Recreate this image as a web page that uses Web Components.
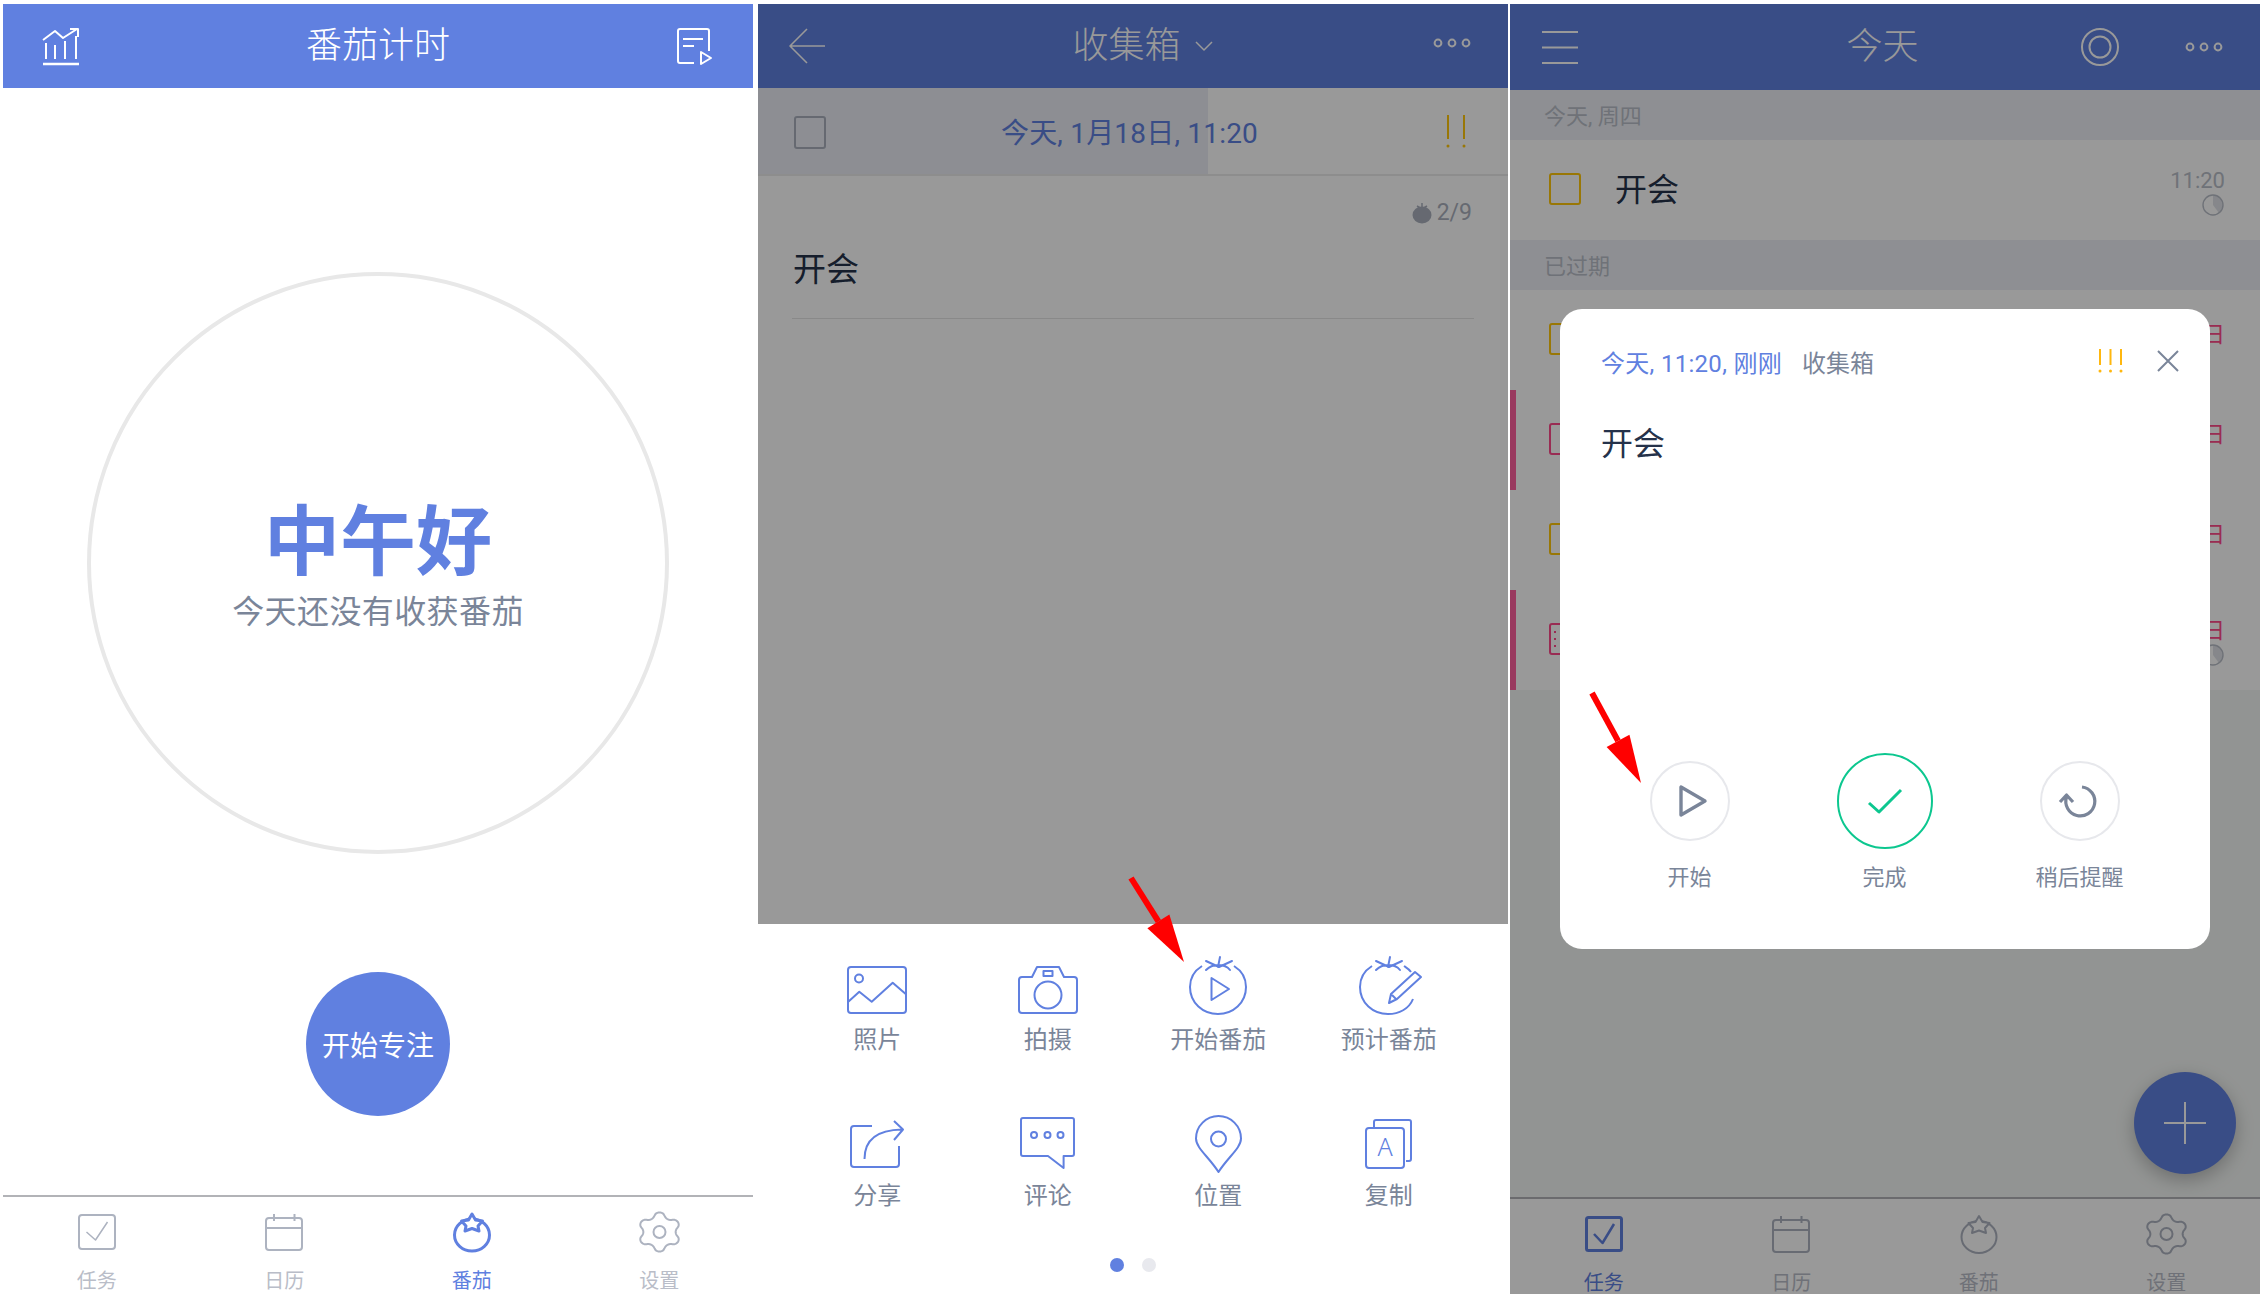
<!DOCTYPE html>
<html lang="zh">
<head>
<meta charset="utf-8">
<title>番茄计时</title>
<style>
  html, body { margin: 0; background: #fff; }
  body {
    font-family: Roboto, "Noto Sans CJK SC", "Noto Sans", sans-serif;
    width: 2265px;
    height: 1300px;
    overflow: hidden;
  }
  .screens { display: flex; padding: 4px 0 0 3px; }
  detail-screen { margin-left: 5px; }
  today-screen { margin-left: 2px; }
</style>
</head>
<body>
<div class="screens">
  <focus-screen></focus-screen>
  <detail-screen></detail-screen>
  <today-screen></today-screen>
</div>

<script>
function gearPath() {
  let d = '';
  for (let i = 0; i <= 120; i++) {
    const t = i / 120 * Math.PI * 2;
    const c = Math.cos(6 * t);
    const r = 17.2 + 2.4 * Math.sign(c) * Math.pow(Math.abs(c), 0.7);
    const x = 19.5 + r * Math.sin(t) * 1.09;
    const y = 20 - r * Math.cos(t);
    d += (i ? 'L' : 'M') + x.toFixed(2) + ' ' + y.toFixed(2);
  }
  return d + 'Z';
}

const leaves = '<path d="M17 4 30 10 43 4M31 0 29 10M17 13C21 9 25 8 29 8C33 8 38 9 41 13" stroke-linecap="round"/>';
const tomatoBody = '<ellipse cx="19" cy="22" rx="17.5" ry="16"/><path fill="var(--tab-bg,#fff)" d="M19 1 22.5 7 29.5 8 25 13 26 18 19 15.5 12 18 13 13 8.5 8 15.5 7Z"/>';

const ICONS = {
  chart: [37, 37, '<path d="M0 12 12 3 20 10 34 1M27 1H35V9M3 15V31M12 17V31M22 13V31M33 8V31"/><path d="M0 36H36" stroke-width="2.5"/>'],
  doc: [36, 37, '<path d="M17 35H3a2 2 0 0 1-2-2V3a2 2 0 0 1 2-2H30a2 2 0 0 1 2 2V23M6 11H26M6 18H17M24 24V36L34 30Z"/>'],
  back: [38, 36, '<path d="M37 18H2M19 1 2 18 19 35" stroke-width="1.6"/>'],
  chevron: [18, 10, '<path d="M1 1 9 9 17 1" stroke-width="1.5"/>'],
  more: [38, 10, '<circle cx="5" cy="5" r="3.4"/><circle cx="19" cy="5" r="3.4"/><circle cx="33" cy="5" r="3.4"/>'],
  menu: [36, 33, '<path d="M0 1H36M0 16.5H36M0 32H36"/>'],
  target: [38, 38, '<circle cx="19" cy="19" r="18"/><circle cx="19" cy="19" r="10.5"/>'],
  task: [38, 36, '<rect x="1" y="1" width="36" height="34" rx="3"/><path d="M8.5 18 17.5 26 29.5 8" stroke-width="1.5"/>'],
  taskOn: [38, 36, '<rect x="1.5" y="1.5" width="35" height="33" rx="2" stroke-width="3"/><path d="M9 18 17.5 27 29 8" stroke-width="2.5"/>'],
  calendar: [38, 37, '<rect x="1" y="4" width="36" height="32" rx="3"/><path d="M1 14H37M9 0V7M29.5 0V7"/>'],
  tomato: [38, 39, tomatoBody],
  tomatoOn: [38, 39, `<g stroke-width="3">${tomatoBody}</g>`],
  gear: [39, 40, `<path d="${gearPath()}"/><circle cx="19.5" cy="20" r="6"/>`],
  photo: [60, 48, '<rect x="1" y="1" width="58" height="46" rx="3"/><circle cx="12" cy="12.5" r="4"/><path d="M1 36 12.3 25.7 24.7 35.7 45.7 16.7 59 28.3"/>'],
  camera: [60, 48, '<path d="M4 11H14L19 1H41L46 11H56a3 3 0 0 1 3 3V44a3 3 0 0 1-3 3H4a3 3 0 0 1-3-3V14a3 3 0 0 1 3-3Z"/><circle cx="30" cy="29" r="13.5"/><rect x="25.5" y="5" width="9" height="5"/>'],
  startTomato: [58, 58, `<path d="M13 9C5 14 1 22 1 30C1 46 14 57 29 57C44 57 57 46 57 30C57 22 53 14 45 9"/>${leaves}<path d="M22.5 21V43L40 32Z"/>`],
  planTomato: [63, 58, `<path d="M13 9C5 14 1 22 1 30C1 46 14 57 29 57C40 57 50 52 54 42M45 9C48 11 50 12 52 15"/>${leaves}<path d="M30 46 32 37 56 15 62 20 38 42ZM33 38 37 42"/>`],
  share: [54, 48, '<path d="M22 6H4a3 3 0 0 0-3 3V44a3 3 0 0 0 3 3H46a3 3 0 0 0 3-3V26M14.5 39C14.5 22 24 10 52 9.5M44 1 53 9.5 44 20"/>'],
  comment: [55, 53, '<path d="M3 1H52a2 2 0 0 1 2 2V37a2 2 0 0 1-2 2H43.6V51L28 39H3a2 2 0 0 1-2-2V3a2 2 0 0 1 2-2Z"/><circle cx="14" cy="18" r="3"/><circle cx="27.5" cy="18" r="3"/><circle cx="40.5" cy="18" r="3"/>'],
  pin: [47, 58, '<path d="M23.5 57C14 42 1 33 1 23.5A22.5 22.5 0 0 1 46 23.5C46 33 33 42 23.5 57Z"/><circle cx="23.5" cy="24" r="7.5"/>'],
  copy: [47, 50, '<rect x="1" y="9" width="38" height="40" rx="3"/><path d="M9 8V3a2 2 0 0 1 2-2H44a2 2 0 0 1 2 2V40a2 2 0 0 1-2 2H41"/><text x="20" y="37" font-size="25" font-weight="300" text-anchor="middle" fill="currentColor" stroke="none" font-family="Noto Sans, sans-serif">A</text>'],
  close: [22, 22, '<path d="M1 1 21 21M21 1 1 21"/>'],
  play: [30, 32, '<path d="M3 2V30L27 16Z" stroke-width="3.4" stroke-linejoin="round"/>'],
  check: [34, 24, '<path d="M1 14 11 23 33 1" stroke-width="3"/>'],
  redo: [40, 40, '<path d="M22 6A14.5 14.5 0 1 1 6.5 16M0 21 6.5 14 13 21" stroke-width="3.2"/>'],
  plus: [42, 42, '<path d="M21 0V42M0 21H42"/>'],
  miniTomato: [20, 20, '<ellipse cx="10" cy="12" rx="9.5" ry="8.5" fill="currentColor" stroke="none"/><path d="M5 3 10 6 15 3M10 0V6" stroke-width="1.5"/>'],
  pie: [22, 22, '<path d="M11 1A10 10 0 0 1 17 19L11 11Z" fill="#dfe2e8" stroke="none"/><circle cx="11" cy="11" r="10" stroke-width="1.4"/>'],
  bang2: [18, 34, '<path d="M1 0V24M17 0V24"/><circle cx="1" cy="31" r="1.5" fill="currentColor" stroke="none"/><circle cx="17" cy="31" r="1.5" fill="currentColor" stroke="none"/>'],
  bang3: [23, 24, '<path d="M1 0V16M11.5 0V16M22 0V16"/><circle cx="1" cy="22" r="1.5" fill="currentColor" stroke="none"/><circle cx="11.5" cy="22" r="1.5" fill="currentColor" stroke="none"/><circle cx="22" cy="22" r="1.5" fill="currentColor" stroke="none"/>']
};

class AppIcon extends HTMLElement {
  connectedCallback() {
    const [w, h, body] = ICONS[this.getAttribute('name')];
    this.attachShadow({ mode: 'open' }).innerHTML = `
      <style>
        :host { display: inline-flex; flex: none; line-height: 0; }
        svg { display: block; overflow: visible; }
      </style>
      <svg width="${w}" height="${h}" viewBox="0 0 ${w} ${h}" fill="none" stroke="currentColor" stroke-width="2" stroke-linejoin="round">${body}</svg>`;
  }
}

class RedArrow extends HTMLElement {
  connectedCallback() {
    const [x1, y1, x2, y2] = this.getAttribute('points').split(' ').map(Number);
    const len = Math.hypot(x2 - x1, y2 - y1);
    const ux = (x2 - x1) / len, uy = (y2 - y1) / len;
    const bx = x2 - ux * 48, by = y2 - uy * 48;
    const ax = bx - uy * 13, ay = by + ux * 13;
    const cx = bx + uy * 13, cy = by - ux * 13;
    this.attachShadow({ mode: 'open' }).innerHTML = `
      <style>
        :host { position: absolute; left: 0; top: 0; z-index: 5; }
        svg { display: block; overflow: visible; }
      </style>
      <svg width="1" height="1">
        <line x1="${x1}" y1="${y1}" x2="${bx}" y2="${by}" stroke="#f00" stroke-width="6"/>
        <polygon points="${ax},${ay} ${cx},${cy} ${x2},${y2}" fill="#f00"/>
      </svg>`;
  }
}

class AppHeader extends HTMLElement {
  connectedCallback() {
    this.attachShadow({ mode: 'open' }).innerHTML = `
      <style>
        :host {
          display: grid;
          grid-template-columns: 1fr auto 1fr;
          align-items: center;
          flex: none;
          height: var(--head-h, 84px);
          padding: 0 var(--head-pad-r, 40px) 0 var(--head-pad-l, 40px);
          box-sizing: border-box;
          background: #6080e0;
          color: #fff;
          font-size: 36px;
          font-weight: 300;
          line-height: 44px;
        }
        .left { display: flex; justify-content: flex-start; }
        .center { display: flex; align-items: center; }
        .right { display: flex; justify-content: flex-end; align-items: center; }
      </style>
      <div class="left"><slot name="left"></slot></div>
      <div class="center"><slot></slot></div>
      <div class="right"><slot name="right"></slot></div>`;
  }
}

class TabBar extends HTMLElement {
  connectedCallback() {
    const on = this.getAttribute('active');
    const tabs = [['任务', 'task'], ['日历', 'calendar'], ['番茄', 'tomato'], ['设置', 'gear']];
    this.attachShadow({ mode: 'open' }).innerHTML = `
      <style>
        :host {
          display: grid;
          grid-template-columns: repeat(4, 1fr);
          flex: none;
          height: var(--tab-h, 99px);
          box-sizing: border-box;
          border-top: 2px solid #b2b3b7;
          background: #fff;
        }
        .tab { display: flex; flex-direction: column; align-items: center; padding-top: 15px; color: #adb3c0; }
        .tab.on { color: #6080e0; }
        .box { height: 40px; display: flex; align-items: center; justify-content: center; }
        .label { margin-top: 17px; font-size: 20px; line-height: 24px; color: #b9bdc8; }
        .on .label { color: #6080e0; }
      </style>
      ${tabs.map(([label, icon]) => {
        const isOn = label === on;
        const name = isOn ? icon + 'On' : icon;
        return `<div class="tab${isOn ? ' on' : ''}"><div class="box"><app-icon name="${name}"></app-icon></div><div class="label">${label}</div></div>`;
      }).join('')}`;
  }
}

class FocusScreen extends HTMLElement {
  connectedCallback() {
    this.attachShadow({ mode: 'open' }).innerHTML = `
      <style>
        :host {
          display: flex;
          flex-direction: column;
          flex: none;
          width: 750px;
          height: 1290px;
          background: #fff;
        }
        main { flex: 1; display: flex; flex-direction: column; align-items: center; padding-top: 184px; }
        .ring {
          width: 582px;
          height: 582px;
          box-sizing: border-box;
          border: 4px solid #e8e8e8;
          border-radius: 50%;
          padding-top: 9px;
          display: flex;
          flex-direction: column;
          align-items: center;
          justify-content: center;
        }
        h1 { margin: 0 0 9px; font-size: 76px; line-height: 80px; font-weight: 700; color: #6080e0; }
        p { margin: 0; font-size: 32px; line-height: 40px; letter-spacing: .4px; color: #7a8599; }
        .go {
          margin-top: 118px;
          width: 144px;
          height: 144px;
          border-radius: 50%;
          background: #6080e0;
          color: #fff;
          font-size: 28px;
          display: flex;
          align-items: center;
          justify-content: center;
        }
      </style>
      <app-header>
        <app-icon slot="left" name="chart"></app-icon>
        番茄计时
        <app-icon slot="right" name="doc"></app-icon>
      </app-header>
      <main>
        <div class="ring">
          <h1>中午好</h1>
          <p>今天还没有收获番茄</p>
        </div>
        <div class="go">开始专注</div>
      </main>
      <tab-bar active="番茄"></tab-bar>`;
  }
}

class SheetItem extends HTMLElement {
  connectedCallback() {
    this.attachShadow({ mode: 'open' }).innerHTML = `
      <style>
        :host { display: flex; flex-direction: column; align-items: center; }
        .box { height: 59px; display: flex; align-items: center; justify-content: center; color: #6080e0; }
        .label { margin-top: var(--label-gap, 13px); font-size: 24px; line-height: 24px; color: #7a8599; white-space: nowrap; }
      </style>
      <div class="box"><slot></slot></div>
      <div class="label">${this.getAttribute('label')}</div>`;
  }
}

class DetailScreen extends HTMLElement {
  connectedCallback() {
    this.attachShadow({ mode: 'open' }).innerHTML = `
      <style>
        :host {
          display: flex;
          flex-direction: column;
          flex: none;
          width: 750px;
          height: 1290px;
          background: #fff;
          position: relative;
        }
        .top { position: relative; flex: none; height: 920px; display: flex; flex-direction: column; }
        .scrim { position: absolute; inset: 0; background: rgba(0, 0, 0, .4); }
        .title { margin-left: 26px; display: flex; align-items: center; gap: 14px; }
        .date {
          flex: none;
          height: 88px;
          box-sizing: border-box;
          display: grid;
          grid-template-columns: 1fr auto 1fr;
          align-items: center;
          padding: 0 43px 0 36px;
          background: linear-gradient(90deg, #ebedf5 450px, #fff 450px);
          border-bottom: 2px solid #ececec;
          font-size: 28px;
          letter-spacing: .2px;
          color: #6080e0;
        }
        .box { width: 32px; height: 33px; box-sizing: border-box; border: 2.5px solid #aab0bd; border-radius: 3px; margin-top: 2px; }
        .flag { justify-self: end; color: #ffc60a; margin-top: 2px; }
        .note { margin: 0 34px; padding-top: 25px; padding-bottom: 28px; border-bottom: 1px solid #e4e4e4; }
        .count { display: flex; justify-content: flex-end; align-items: center; gap: 5px; font-size: 23px; line-height: 24px; color: #aab0bd; padding-right: 2px; }
        .name { margin-top: 25px; padding-left: 1px; font-size: 33px; line-height: 40px; color: #25324a; }
        .sheet { flex: 1; padding-top: 32px; }
        .grid { display: grid; grid-template-columns: repeat(4, 170.5px); row-gap: 62px; padding-left: 34px; }
        .row2 { --label-gap: 11px; }
        .dots { display: flex; justify-content: center; gap: 18px; margin-top: 50px; }
        .dots i { width: 14px; height: 14px; border-radius: 50%; background: #e8e9ee; }
        .dots i:first-child { background: #6080e0; }
      </style>
      <div class="top">
        <app-header style="--head-pad-l:30px;--head-pad-r:37px">
          <app-icon slot="left" name="back"></app-icon>
          <div class="title">收集箱<app-icon name="chevron"></app-icon></div>
          <app-icon slot="right" name="more" style="margin-top:-6px"></app-icon>
        </app-header>
        <div class="date">
          <div class="box"></div>
          <div>今天, 1月18日, 11:20</div>
          <app-icon class="flag" name="bang2"></app-icon>
        </div>
        <div class="note">
          <div class="count"><app-icon name="miniTomato"></app-icon>2/9</div>
          <div class="name">开会</div>
        </div>
        <div class="scrim"></div>
      </div>
      <div class="sheet">
        <div class="grid">
          <sheet-item label="照片"><app-icon name="photo" style="margin-top:8px"></app-icon></sheet-item>
          <sheet-item label="拍摄"><app-icon name="camera" style="margin-top:8px"></app-icon></sheet-item>
          <sheet-item label="开始番茄"><app-icon name="startTomato"></app-icon></sheet-item>
          <sheet-item label="预计番茄"><app-icon name="planTomato" style="margin-left:4px"></app-icon></sheet-item>
          <sheet-item class="row2" label="分享"><app-icon name="share"></app-icon></sheet-item>
          <sheet-item class="row2" label="评论"><app-icon name="comment"></app-icon></sheet-item>
          <sheet-item class="row2" label="位置"><app-icon name="pin"></app-icon></sheet-item>
          <sheet-item class="row2" label="复制"><app-icon name="copy"></app-icon></sheet-item>
        </div>
        <div class="dots"><i></i><i></i></div>
      </div>
      <red-arrow points="373 874 426 958"></red-arrow>`;
  }
}

class TaskRow extends HTMLElement {
  connectedCallback() {
    const red = this.hasAttribute('red');
    const col = red ? '#ff4a8a' : '#ffc60a';
    const overdue = this.hasAttribute('overdue');
    const pie = this.hasAttribute('pie');
    this.attachShadow({ mode: 'open' }).innerHTML = `
      <style>
        :host {
          display: flex;
          align-items: center;
          height: 100px;
          box-sizing: border-box;
          padding: 0 35px 0 39px;
          background: #fff;
          ${this.hasAttribute('bar') ? 'box-shadow: inset 6px 0 0 #ff5f9f;' : ''}
        }
        .box {
          width: 32px;
          height: 32px;
          box-sizing: border-box;
          border: 2.5px solid ${col};
          border-radius: 3px;
          margin: -2px 34px 0 0;
          display: flex;
          flex-direction: column;
          align-items: flex-start;
          justify-content: center;
          gap: 5px;
          padding-left: 3px;
        }
        .box i { width: 2px; height: 2px; background: ${col}; }
        .title { flex: 1; font-size: 32px; line-height: 40px; color: #25324a; }
        .meta { display: flex; flex-direction: column; align-items: flex-end; color: ${overdue ? '#ff4a8a' : '#b9bec8'}; font-size: 22px; line-height: 34px; }
        .top-meta { margin-top: ${pie ? '0' : '-11px'}; }
        app-icon { margin-top: -4px; margin-right: 1px; color: #b9bec8; }
      </style>
      <div class="box">${this.hasAttribute('sub') ? '<i></i><i></i><i></i>' : ''}</div>
      <div class="title"><slot></slot></div>
      <div class="meta">
        <div class="top-meta">${this.getAttribute('meta') || ''}</div>
        ${pie ? '<app-icon name="pie"></app-icon>' : ''}
      </div>`;
  }
}

class ReminderDialog extends HTMLElement {
  connectedCallback() {
    this.attachShadow({ mode: 'open' }).innerHTML = `
      <style>
        :host {
          display: flex;
          flex-direction: column;
          width: 650px;
          height: 640px;
          box-sizing: border-box;
          padding: 38px 31px 58px 41px;
          border-radius: 22px;
          background: #fff;
        }
        .head { display: flex; align-items: center; height: 28px; font-size: 24px; line-height: 28px; color: #7a8599; }
        .head span { padding-top: 6px; }
        .when { color: #6080e0; margin-right: 20px; letter-spacing: .3px; }
        .flag { margin-left: auto; color: #ffb70f; margin-right: 35px; }
        .close { color: #7a8599; margin-right: 0; }
        .name { margin-top: 49px; font-size: 32px; line-height: 40px; color: #25324a; }
        .actions { margin-top: auto; margin-left: -9px; display: grid; grid-template-columns: repeat(3, 195px); }
        .act { display: flex; flex-direction: column; align-items: center; font-size: 22px; line-height: 26px; color: #7a8599; }
        .slot { height: 96px; display: flex; align-items: center; justify-content: center; margin-bottom: 16px; }
        .round {
          width: 80px;
          height: 80px;
          box-sizing: border-box;
          border: 2px solid #e7e8ec;
          border-radius: 50%;
          display: flex;
          align-items: center;
          justify-content: center;
        }
        .done { width: 96px; height: 96px; border-color: #0cc78f; color: #0cc78f; }
      </style>
      <div class="head">
        <span class="when">今天, 11:20, 刚刚</span>
        <span>收集箱</span>
        <app-icon class="flag" name="bang3"></app-icon>
        <app-icon class="close" name="close"></app-icon>
      </div>
      <div class="name">开会</div>
      <div class="actions">
        <div class="act"><div class="slot"><div class="round"><app-icon name="play" style="margin-left:6px"></app-icon></div></div>开始</div>
        <div class="act"><div class="slot"><div class="round done"><app-icon name="check"></app-icon></div></div>完成</div>
        <div class="act"><div class="slot"><div class="round"><app-icon name="redo"></app-icon></div></div>稍后提醒</div>
      </div>`;
  }
}

class TodayScreen extends HTMLElement {
  connectedCallback() {
    this.attachShadow({ mode: 'open' }).innerHTML = `
      <style>
        :host {
          display: flex;
          flex-direction: column;
          flex: none;
          width: 750px;
          height: 1290px;
          position: relative;
          background: #f4f7f5;
          --head-h: 86px;
          --tab-h: 97px;
        }
        main { flex: 1; }
        .sect {
          height: 50px;
          box-sizing: border-box;
          padding-left: 34px;
          background: #edeff5;
          color: #b9bec8;
          font-size: 22px;
          line-height: 53px;
        }
        .more { margin-left: 66px; }
        .fab {
          position: absolute;
          left: 624px;
          top: 1068px;
          width: 102px;
          height: 102px;
          border-radius: 50%;
          background: #6080e0;
          color: #fff;
          display: flex;
          align-items: center;
          justify-content: center;
          box-shadow: 0 6px 18px rgba(0, 0, 0, .25);
        }
        .scrim {
          position: absolute;
          inset: 0;
          background: rgba(0, 0, 0, .4);
          display: flex;
          justify-content: center;
          align-items: flex-start;
          padding-top: 305px;
          box-sizing: border-box;
        }
      </style>
      <app-header style="--head-pad-l:32px;--head-pad-r:37px">
        <app-icon slot="left" name="menu"></app-icon>
        <div>今天</div>
        <span slot="right" style="display:flex;align-items:center">
          <app-icon name="target"></app-icon>
          <app-icon class="more" name="more"></app-icon>
        </span>
      </app-header>
      <main>
        <div class="sect">今天, 周四</div>
        <task-row meta="11:20" pie>开会</task-row>
        <div class="sect">已过期</div>
        <task-row meta="日" overdue></task-row>
        <task-row meta="日" overdue red bar></task-row>
        <task-row meta="日" overdue></task-row>
        <task-row meta="日" overdue red bar sub pie></task-row>
      </main>
      <tab-bar active="任务"></tab-bar>
      <div class="fab"><app-icon name="plus"></app-icon></div>
      <div class="scrim"><reminder-dialog></reminder-dialog></div>
      <red-arrow points="82 689 131 779"></red-arrow>`;
  }
}

customElements.define('app-icon', AppIcon);
customElements.define('red-arrow', RedArrow);
customElements.define('app-header', AppHeader);
customElements.define('tab-bar', TabBar);
customElements.define('sheet-item', SheetItem);
customElements.define('task-row', TaskRow);
customElements.define('reminder-dialog', ReminderDialog);
customElements.define('focus-screen', FocusScreen);
customElements.define('detail-screen', DetailScreen);
customElements.define('today-screen', TodayScreen);
</script>
</body>
</html>
